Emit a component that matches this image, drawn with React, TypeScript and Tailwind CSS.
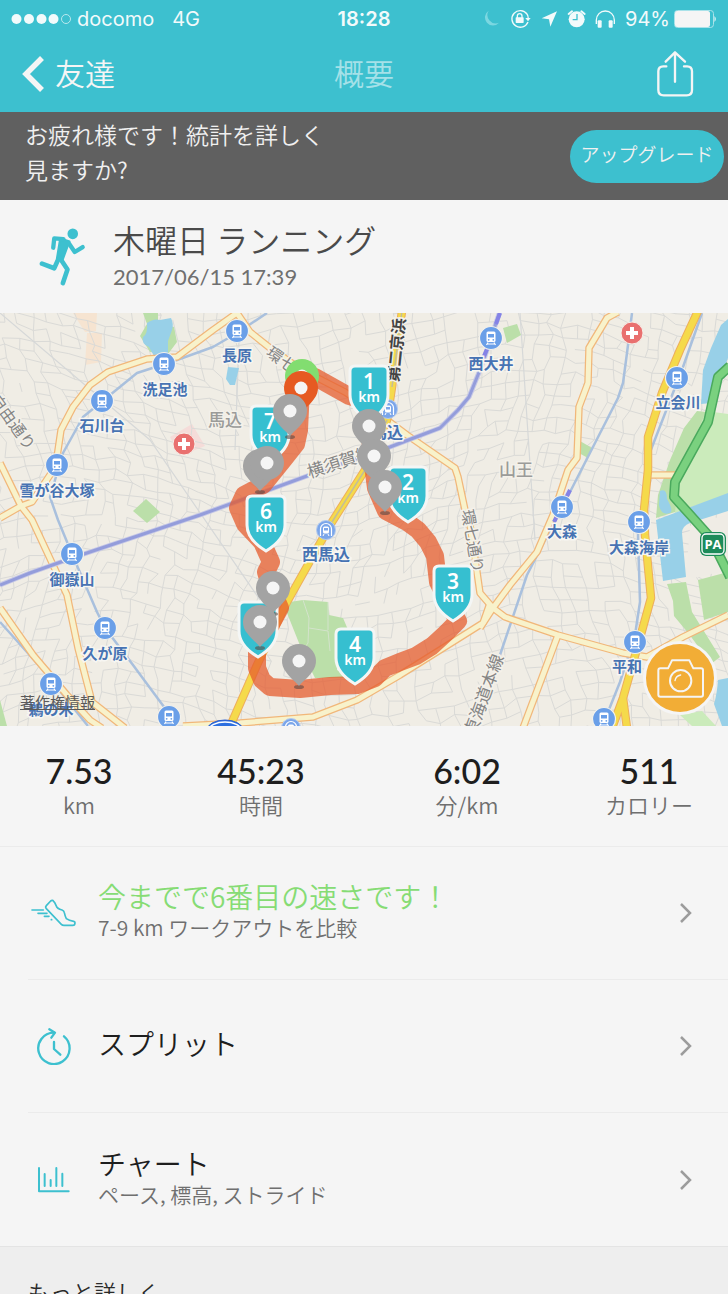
import type { ReactNode } from 'react';

const jp = "font-['Noto_Sans_CJK_JP','Noto_Sans',sans-serif]";
const num = "font-['Lato','Noto_Sans_CJK_JP',sans-serif]";

function StatusGlyphs() {
  return (
    <svg width="135" height="20" viewBox="355 25 405 60" fill="none" aria-hidden="true">
      <path d="M375 30a24 24 0 1 0 31 36a25 25 0 0 1-31-36z" fill="#7bd7e1" />
      <g stroke="#f2fafb" strokeWidth="4">
        <path d="M490 40a25 25 0 1 0 3 24M488 37q6 7 6 17" />
        <path d="M461 52v-6a7 7 0 0 1 14 0v6" />
      </g>
      <rect x="456" y="50" width="24" height="17" rx="2" fill="#f2fafb" />
      <path d="M485 52h16l-8 10z" fill="#f2fafb" />
      <path d="M580 32L534 53l22 3l4 22z" fill="#f2fafb" />
      <circle cx="639" cy="56" r="24" fill="#f2fafb" />
      <path d="M615 40l10-8M663 40l-10-8" stroke="#f2fafb" strokeWidth="6" strokeLinecap="round" />
      <path d="M640 40v17h-13" stroke="#3dc0cf" strokeWidth="4" />
      <path d="M698 70v-12a27 27 0 0 1 54 0v12" stroke="#f2fafb" strokeWidth="4" />
      <rect x="702" y="59" width="12" height="22" rx="3" fill="#f2fafb" />
      <rect x="735" y="59" width="12" height="22" rx="3" fill="#f2fafb" />
    </svg>
  );
}

function StatusBar() {
  return (
    <div className="grid grid-cols-3 items-center px-[11px] pt-0.5 h-9 text-xl text-[#f2fafb] font-['Inter',sans-serif]">
      <div className="flex items-center">
        <svg width="62" height="12" viewBox="0 0 62 12" aria-hidden="true">
          {[5.5, 18, 30.5, 42.5].map((x) => (
            <circle key={x} cx={x} cy="6" r="5" fill="#f2fafb" />
          ))}
          <circle cx="55" cy="6" r="4.5" fill="none" stroke="#b9e8ee" />
        </svg>
        <span className="ml-1">docomo</span>
        <span className="ml-[18px]">4G</span>
      </div>
      <span className="text-center font-semibold">18:28</span>
      <div className="flex items-center justify-end gap-2">
        <StatusGlyphs />
        <span>94%</span>
        <svg width="43" height="18" viewBox="0 0 43 18" className="-ml-1" aria-hidden="true">
          <rect x="0.5" y="0.5" width="39" height="17" rx="3" fill="none" stroke="#a9e2e9" />
          <rect x="1" y="1" width="35" height="16" rx="2" fill="#f5f5f5" />
          <path d="M40.5 6q2.5 3 0 6z" fill="#f2fafb" />
        </svg>
      </div>
    </div>
  );
}

function NavBar() {
  return (
    <nav className={`${jp} grid grid-cols-3 items-center h-[76px] pl-[22px] pr-[34px] text-3xl`}>
      <button className="flex items-center gap-[11px] text-[#f5f5f5] font-[350]">
        <svg width="22" height="38" viewBox="0 0 22 38" fill="none" aria-hidden="true">
          <path d="M20 3L4 19l16 16" stroke="#f5f5f5" strokeWidth="5.5" />
        </svg>
        <span className="pb-1">友達</span>
      </button>
      <h1 className="text-center font-[350] text-[#a5e1e8] pl-3 pb-1">概要</h1>
      <button className="justify-self-end" aria-label="共有">
        <svg width="38" height="48" viewBox="876 146 114 144" fill="none" stroke="#f5f5f5" strokeWidth="7" strokeLinecap="round" strokeLinejoin="round" aria-hidden="true">
          <path d="M907 195h-9q-15 0-15 15v56q0 16 16 16h69q16 0 16-16v-56q0-15-15-15h-9" />
          <path d="M933 241v-88M905 181l28-28l30 28" />
        </svg>
      </button>
    </nav>
  );
}

function UpgradeBanner() {
  return (
    <div className={`${jp} flex items-center justify-between bg-[#606060] h-[88px] pl-[25px] pr-1 font-[350] text-[#f0f0f0]`}>
      <p className="text-[23px] leading-[35px] pb-2">
        お疲れ様です！統計を詳しく
        <br />
        見ますか?
      </p>
      <button className="bg-[#3dc0cf] rounded-full w-[154px] h-[53px] text-[19px] pb-1 whitespace-nowrap">アップグレード</button>
    </div>
  );
}

function WorkoutTitle() {
  return (
    <div className="flex items-center gap-[27px] pl-[39px] h-[113px]">
      <svg width="47" height="60" viewBox="118 85 142 180" fill="none" stroke="#3dc0cf" strokeLinecap="round" strokeLinejoin="round" aria-hidden="true">
        <circle cx="220" cy="105" r="16" fill="#3dc0cf" stroke="none" />
        <path d="M182 118L210 128L190 182L172 180z" fill="#3dc0cf" strokeWidth="6" />
        <path d="M192 121L164 119L161 147" strokeWidth="13" />
        <path d="M207 132L226 160L250 145" strokeWidth="13" />
        <path d="M181 178L204 213L190 254" strokeWidth="14" />
        <path d="M179 176L164 209L127 195" strokeWidth="14" />
      </svg>
      <div>
        <h2 className={`${jp} text-[32px] leading-9 pb-1 font-[350] text-[#4a4a4a]`}>木曜日 ランニング</h2>
        <p className={`${num} text-[22px] leading-8 text-[#6f6f6f]`}>2017/06/15 17:39</p>
      </div>
    </div>
  );
}

// Small side streets: a warped grid with some of its edges left out.
function noise(i: number, j: number) {
  const v = Math.sin(i * 127.1 + j * 311.7) * 43758.5453;
  return v - Math.floor(v);
}

function streetPoint(i: number, j: number) {
  const x = i * 14 - 60;
  const y = 250 + j * 12;
  const px = x + 22 * Math.sin(y / 70 + x / 190) + (noise(i, j) - 0.5) * 7;
  const py = y + 24 * Math.sin(x / 80 - y / 230) + (noise(j, i + 50) - 0.5) * 6;
  return `${px.toFixed(1)} ${py.toFixed(1)}`;
}

function buildStreets() {
  let d = '';
  for (let i = 0; i < 62; i++) {
    for (let j = 0; j < 46; j++) {
      if (noise(i + 7, j) > 0.22) d += `M${streetPoint(i, j)}L${streetPoint(i + 1, j)}`;
      if (noise(i, j + 9) > 0.22) d += `M${streetPoint(i, j)}L${streetPoint(i, j + 1)}`;
    }
  }
  return d;
}

const streets = buildStreets();

const parks = [
  'M143 313h15v10l16 4l3 15l-9 12l-18-2l-10-16l7-12z',
  'M146 499l14 13l-13 11l-14-12z',
  'M503 328l14-4l4 11l-14 8z',
  'M580 441l12 7l-4 10l-11-6z',
  'M283 603l20-3l25 2l1 13l14 3l6 14l-12 0l0 38l12 8h-34l-10-20z',
  'M697 411L684 428L670 460L658 495L656 518L675 512L680 470L706 412z',
  'M667 584l19-2l6 30l28 45l-9 7l-22-30l-15-18l-1-15z',
  'M698 580l30-8v40l-24 8z',
  'M0 700l7 26h-7z',
];

const water = [
  'M147 323q7-5 13-3l11-2q3 6 1 12l-4 11l0 12l-7 2l-7 1l-5-9q-8-3-6-10q5-3 4-14z',
  'M228 367l11 1l-4 17h-5l-4-6z',
  'M728 319l-7 6l-10 23l-8 22l-2 34l11-1l16-45z',
  'M656 520l72-27v18l-38 12q-8 3-8 10l4 44l-23 4z',
  'M728 678l-10 2q-1 14-4 24l8 22h6z',
  'M660 491q7-3 7 8q7 12 3 14q-9 3-11-8z',
];

const roads = [
  'M0 518L21 506L32 502L50 475L57 457L61 430L73 407L90 385L108 372L147 359L177 357L213 330L237 313L250 332L270 348L302 370L345 392L387 420L407 435L455 468L458 477L465 510L470 525L477 572L480 593L493 608L505 617L558 635L623 653L647 657L683 637L728 615',
  'M490 603L483 623L440 650L400 675L357 700L313 717L240 723L183 726',
  'M480 628L493 608L510 585L537 552L553 515L568 470L577 458L579 407L588 383L589 348L607 318L618 312',
  'M558 635L523 728',
  'M0 463L21 506L32 520L67 595L78 648L92 702L125 728',
  'M0 608L33 655L67 695L90 720L102 728',
  'M651 475H675',
];

const highways = [
  'M402 311L392 387L387 420L365 470L332 522L287 602L257 665L232 722',
  'M698 311L680 350L662 393L648 437L648 470L644 510L645 535L651 598L640 638L623 698L612 728M623 698L627 728',
];

const railways = [
  'M267 313L237 333L213 347L177 360L137 373L83 417L63 453L50 497L58 520L72 554L97 612L105 628L133 665L170 715',
  'M0 622L43 670L88 726',
  'M632 313L627 353L623 383L618 398L570 492L558 515L527 575L500 655',
  'M702 313L683 367L647 460L642 507L638 535L640 602L635 635L620 682L608 712',
];

const mainLine =
  'M0 585L30 573L72 558L200 515L277 487L307 476L390 447L440 428L458 410L469 397L480 370L487 350L500 311';
const expressway = 'M730 366L718 377L708 422L675 482L674 497L693 518L710 537L730 577';

const stations = [
  { name: '長原', x: 237, y: 331, tx: 237, ty: 361 },
  { name: '洗足池', x: 164, y: 364, tx: 165, ty: 395 },
  { name: '石川台', x: 102, y: 401, tx: 102, ty: 431 },
  { name: '雪が谷大塚', x: 57, y: 465, tx: 57, ty: 496 },
  { name: '西大井', x: 491, y: 338, tx: 491, ty: 369 },
  { name: '立会川', x: 677, y: 378, tx: 678, ty: 408 },
  { name: '大森', x: 562, y: 507, tx: 562, ty: 537 },
  { name: '大森海岸', x: 639, y: 522, tx: 639, ty: 553 },
  { name: '御嶽山', x: 72, y: 554, tx: 72, ty: 585 },
  { name: '久が原', x: 105, y: 628, tx: 105, ty: 659 },
  { name: '鵜の木', x: 51, y: 684, tx: 51, ty: 715 },
  { name: '平和', x: 635, y: 642, tx: 627, ty: 672 },
  { name: '', x: 169, y: 717, tx: 0, ty: 0 },
  { name: '', x: 604, y: 719, tx: 0, ty: 0 },
];

const shields = [
  { km: 7, x: 270, y: 407 },
  { km: 1, x: 369, y: 367 },
  { km: 2, x: 408, y: 468 },
  { km: 6, x: 266, y: 497 },
  { km: 4, x: 355, y: 630 },
  { km: 3, x: 453, y: 567 },
];

function Station({ x, y }: { x: number; y: number }) {
  return (
    <g transform={`translate(${x} ${y})`}>
      <circle r="11.5" fill="#6a9fe8" stroke="#f4f2ec" strokeWidth="1.2" />
      <rect x="-4.5" y="-6.5" width="9" height="10.5" rx="1.5" fill="#fff" />
      <rect x="-3" y="-4" width="6" height="3.5" fill="#6a9fe8" />
      <circle cx="-2.3" cy="1.8" r="0.9" fill="#6a9fe8" />
      <circle cx="2.3" cy="1.8" r="0.9" fill="#6a9fe8" />
      <path d="M-3 4.5L-4.5 7M3 4.5L4.5 7M-4 6h8" stroke="#fff" strokeWidth="1.2" />
    </g>
  );
}

function Subway({ x, y }: { x: number; y: number }) {
  return (
    <g transform={`translate(${x} ${y})`}>
      <circle r="9.5" fill="#7ba6ea" stroke="#b4cbee" strokeWidth="1" />
      <path d="M-5.5 6V-1a5.5 5.5 0 0 1 11 0V6" fill="none" stroke="#fff" strokeWidth="1.2" />
      <rect x="-3" y="-3.5" width="6" height="7" rx="1.5" fill="#fff" />
      <rect x="-2" y="-2" width="4" height="2.5" fill="#7ba6ea" />
      <path d="M-3 6l1-2M3 6l-1-2" stroke="#fff" />
    </g>
  );
}

function Hospital({ x, y }: { x: number; y: number }) {
  return (
    <g transform={`translate(${x} ${y})`}>
      <circle r="11" fill="#e9706f" stroke="#f6efe9" />
      <path d="M-6 0H6M0-6V6" stroke="#fff" strokeWidth="4" />
    </g>
  );
}

function Shield({ km, x, y }: { km?: number; x: number; y: number }) {
  return (
    <g transform={`translate(${x} ${y})`} className="font-['Noto_Sans',sans-serif]" fill="#fff" textAnchor="middle">
      <path
        d="M-14-1H14q5 0 5 5V28C19 40 10 48 0 54C-10 48-19 40-19 28V4q0-5 5-5z"
        fill="#36bfd0"
        stroke="#f4f6f5"
        strokeWidth="3"
      />
      {km && (
        <>
          <text y="22" fontSize="21" fontWeight="600">{km}</text>
          <text y="35" fontSize="14" fontWeight="600">km</text>
        </>
      )}
    </g>
  );
}

function Pin({ x, y, color = '#a3a3a3' }: { x: number; y: number; color?: string }) {
  return (
    <g transform={`translate(${x} ${y})`}>
      <ellipse cy="26" rx="5" ry="2" fill="#5c4a44" opacity="0.6" />
      <path d="M0 25C-4 20-9 17-13 11A17 17 0 1 1 13 11C9 17 4 20 0 25z" fill={color} />
      <circle r="6.5" fill="#f5f5f5" />
    </g>
  );
}

function RoadName({ x, y, angle, size = 16, dark, children }: { x: number; y: number; angle: number; size?: number; dark?: boolean; children: ReactNode }) {
  return (
    <text
      transform={`translate(${x} ${y}) rotate(${angle})`}
      dy="6"
      textAnchor="middle"
      fontSize={size}
      fontWeight={dark ? 700 : 400}
      fill={dark ? '#444' : '#858585'}
      stroke="#f4f1ea"
      strokeWidth="3"
      paintOrder="stroke"
    >
      {children}
    </text>
  );
}

function RouteMap() {
  return (
    <section className={`${jp} relative`}>
      <svg viewBox="0 313 728 413" className="block w-full" role="img" aria-label="ルートマップ">
        <rect y="313" width="728" height="413" fill="#f0ede5" />
        <path d="M73 313h24l-1 18l-11 1zM87 333h15l-1 29l-16 3z" fill="#f6e4d1" />
        <path d="M170 437l22-13l13 22l-25 10z" fill="#f5dcd9" />
        <path d={streets} stroke="#dadad7" fill="none" />
        <path d="M0 313L150 440L260 600M240 313L235 450M520 313L535 540M655 540L728 520" stroke="#d6d8d8" strokeWidth="1.2" fill="none" />
        <path d="M706 411L728 414V494L675 513L668 495z" fill="#cbebbb" />
        <path d="M690 526L728 514V570L694 578L686 576z" fill="#efece5" />
        <path d="M680 715l22-4l14 15h-24z" fill="#cbebbb" />
        {parks.map((d) => <path key={d} d={d} fill="#bbdfa9" />)}
        {water.map((d) => <path key={d} d={d} fill="#98d0e8" />)}
        <path d="M303 600l6 18l-1 25l-7 10M309 628l19 3l2 20M328 602v28" stroke="#d3e3cb" fill="none" />

        <g fill="none" strokeLinejoin="round">
          {railways.map((d) => <path key={d} d={d} stroke="#a9c0dd" strokeWidth="2.5" />)}
          {roads.map((d) => <path key={d} d={d} stroke="#f1b77a" strokeWidth="7.5" />)}
          {roads.map((d) => <path key={d} d={d} stroke="#f8f2cb" strokeWidth="5" />)}
          {highways.map((d) => <path key={d} d={d} stroke="#eeae5c" strokeWidth="8.5" />)}
          {highways.map((d) => <path key={d} d={d} stroke="#f5da4b" strokeWidth="6.5" />)}
          <path d="M402 311L392 387M387 420L365 470L332 522" stroke="#c3bd9a" strokeWidth="1.5" />
          <path d={mainLine} stroke="#c5c7e6" strokeWidth="5" />
          <path d={mainLine} stroke="#949ddb" strokeWidth="3" />
          <path d="M500 313l-4 11M487 349l-3 7M570 490l-4 8M557 516l-3 6" stroke="#8583e6" strokeWidth="4" />
          <path d={expressway} stroke="#4aa95d" strokeWidth="10" />
          <path d={expressway} stroke="#7ad17f" strokeWidth="7" />
        </g>

        <RoadName x={13} y={422} angle={54}>自由通り</RoadName>
        <RoadName x={288} y={364} angle={36}>環七通</RoadName>
        <RoadName x={396} y={350} angle={-84} dark>第二京浜</RoadName>
        <RoadName x={340} y={462} angle={-18} size={17}>横須賀線</RoadName>
        <RoadName x={473} y={541} angle={80}>環七通り</RoadName>
        <RoadName x={484} y={695} angle={-70} size={17}>東海道本線</RoadName>

        <g fill="#9b9b99" stroke="#f4f1ea" strokeWidth="3" paintOrder="stroke" fontSize="17" fontWeight="500" textAnchor="middle">
          <text x="225" y="426">馬込</text>
          <text x="516" y="476">山王</text>
        </g>

        {stations.map((s) => <Station key={`${s.x}-${s.y}`} x={s.x} y={s.y} />)}
        <Subway x={326} y={530} />
        <Subway x={388} y={409} />
        <Subway x={291} y={728} />
        <Hospital x={184} y={444} />
        <Hospital x={632} y={333} />

        <g fill="#4773b3" stroke="#f7f6f2" strokeWidth="3" paintOrder="stroke" fontSize="15" fontWeight="700" textAnchor="middle">
          {stations.map((s) => s.name && <text key={s.name} x={s.tx} y={s.ty}>{s.name}</text>)}
          <text x="326" y="560" fontSize="16">西馬込</text>
          <text x="387" y="438" fontSize="16">馬込</text>
        </g>

        <g transform="translate(713 544)">
          <rect x="-13" y="-12" width="26" height="24" rx="6" fill="#1d8b5a" />
          <rect x="-11" y="-10" width="22" height="20" rx="4" fill="none" stroke="#fff" strokeWidth="1.3" />
          <text y="5" textAnchor="middle" fontSize="13" fontWeight="700" fill="#fff" className="font-['Open_Sans',sans-serif]">PA</text>
        </g>
        <ellipse cx="225" cy="730" rx="18" ry="10" fill="#2c6fe0" stroke="#2c5fd0" />
        <ellipse cx="225" cy="730" rx="16" ry="8" fill="#2c6fe0" stroke="#fff" strokeWidth="1.5" />

        <path
          d="M301 374L315 377L349 396L369 402L371 450L376 488L386 511L407 522L418 530L428 542L435 556L438 582L453 612L458 621L445 634L432 646L416 656L400 662L385 668L375 678L357 685L330 686L300 689L270 687L262 680L257 668L257 650L280 608L270 585L266 572L271 562L262 542L245 524L238 508L244 495L263 485L284 459L296 444L299 430L301 388"
          fill="none"
          stroke="#e65a2d"
          strokeOpacity="0.74"
          strokeWidth="18"
          strokeLinecap="round"
          strokeLinejoin="round"
        />

        {shields.map((s) => <Shield key={s.km} {...s} />)}
        <Shield x={258} y={603} />
        <Pin x={302} y={376} color="#82dd70" />
        <Pin x={301} y={388} color="#e65a22" />
        <Pin x={290} y={411} />
        <Pin x={260} y={466} />
        <circle cx="267" cy="463" r="17" fill="#a3a3a3" />
        <circle cx="267" cy="463" r="6.5" fill="#f5f5f5" />
        <Pin x={369} y={426} />
        <Pin x={374} y={456} />
        <Pin x={385} y={487} />
        <Pin x={273} y={588} />
        <Pin x={260} y={622} />
        <Pin x={299} y={661} />
      </svg>
      <a href="#legal" className="absolute left-5 bottom-3 text-[15px] leading-6 text-[#5a5a5a] underline">著作権情報</a>
      <button aria-label="写真を追加" className="absolute right-[11px] bottom-[11px] size-[74px] rounded-full bg-[#f2ad36] border-3 border-[#f5f5f5] flex items-center justify-center">
        <svg width="48" height="40" viewBox="528 420 144 120" fill="none" stroke="#f5f5f5" strokeWidth="6" strokeLinejoin="round" aria-hidden="true">
          <path d="M541 451h23l12-24h52l12 24h23q6 0 6 6v73q0 6-6 6h-122q-6 0-6-6v-73q0-6 6-6z" />
          <circle cx="602" cy="488" r="32" />
          <path d="M585 488q2-14 17-17" strokeWidth="4" strokeLinecap="round" />
        </svg>
      </button>
    </section>
  );
}

const stats = [
  { value: '7.53', label: 'km' },
  { value: '45:23', label: '時間' },
  { value: '6:02', label: '分/km' },
  { value: '511', label: 'カロリー' },
];

function Stats() {
  return (
    <dl className="grid grid-cols-[158fr_206fr_206fr_158fr] text-center pt-6 h-[120px]">
      {stats.map((s) => (
        <div key={s.label} className="flex flex-col-reverse justify-end">
          <dt className={`${jp} text-[22px] leading-6 font-[350] text-[#6f6f6f]`}>{s.label}</dt>
          <dd className={`${num} text-[34px] leading-[42px] font-medium text-[#1e1e1e]`}>{s.value}</dd>
        </div>
      ))}
    </dl>
  );
}

function ShoeIcon() {
  return (
    <svg width="46" height="30" viewBox="90 82 138 90" fill="none" stroke="#3dc0cf" strokeWidth="5" strokeLinecap="round" strokeLinejoin="round" aria-hidden="true">
      <path d="M158 92q-4-5-9-1L136 105q-4 4 0 9L181 161q3 3 8 3h26q7 0 7-8q0-3-4-4q-14-2-22-8q-4-8-6-18q-1-6-7-8q-15-3-18-14q-3-8-7-12z" />
      <path d="M93 118h34M111 128h27M130 137h14M151 147h1" />
    </svg>
  );
}

function SplitIcon() {
  return (
    <svg width="36" height="38" viewBox="106 470 108 114" fill="none" stroke="#3dc0cf" strokeWidth="7" strokeLinecap="round" strokeLinejoin="round" aria-hidden="true">
      <path d="M190 498a47 47 0 1 1-30-11" />
      <path d="M146 477l17 10l-11 15M160 515v21l19 17" />
    </svg>
  );
}

function ChartIcon() {
  return (
    <svg width="34" height="27" viewBox="115 196 102 81" fill="none" stroke="#3dc0cf" strokeWidth="6" strokeLinecap="round" strokeLinejoin="round" aria-hidden="true">
      <path d="M121 202v70h89M138 220v36M156 238v18M173 202v54M191 219v37" />
    </svg>
  );
}

function Row({ icon, title, note, highlight }: { icon: ReactNode; title: string; note?: string; highlight?: boolean }) {
  return (
    <a href="#details" className={`${jp} flex items-center min-h-[133px] pr-9 font-[350]`}>
      <span className="w-[52px] flex justify-center mr-[18px]">{icon}</span>
      <span className="flex-1 pb-1.5">
        <span className={`block text-[28px] leading-[34px] ${highlight ? 'text-[#86dc74]' : 'text-[#1e1e1e]'}`}>{title}</span>
        {note && <span className="block text-[21px] leading-7 text-[#6f6f6f]">{note}</span>}
      </span>
      <svg width="12" height="22" viewBox="0 0 12 22" fill="none" stroke="#9c9c9c" strokeWidth="2.5" aria-hidden="true">
        <path d="M1 2l9 9l-9 9" />
      </svg>
    </a>
  );
}

export default function App() {
  return (
    <div className="flex flex-col h-screen bg-[#f5f5f5]">
      <header className="shrink-0 bg-[#3dc0cf]">
        <StatusBar />
        <NavBar />
      </header>
      <main className="flex-1 min-h-0 overflow-y-auto [scrollbar-width:none]">
        <UpgradeBanner />
        <WorkoutTitle />
        <RouteMap />
        <Stats />
        <div className="border-t border-[#ebebeb] pl-7">
          <div className="divide-y divide-[#ebebeb]">
            <Row icon={<ShoeIcon />} title="今までで6番目の速さです！" note="7-9 km ワークアウトを比較" highlight />
            <Row icon={<SplitIcon />} title="スプリット" />
            <Row icon={<ChartIcon />} title="チャート" note="ペース, 標高, ストライド" />
          </div>
        </div>
        <section className="border-t border-[#e4e4e4] bg-[#eeeeee] pl-7 pt-7 pb-6">
          <h3 className={`${jp} text-[22px] leading-8 font-[350] text-[#2a2a2a]`}>もっと詳しく</h3>
        </section>
      </main>
    </div>
  );
}
